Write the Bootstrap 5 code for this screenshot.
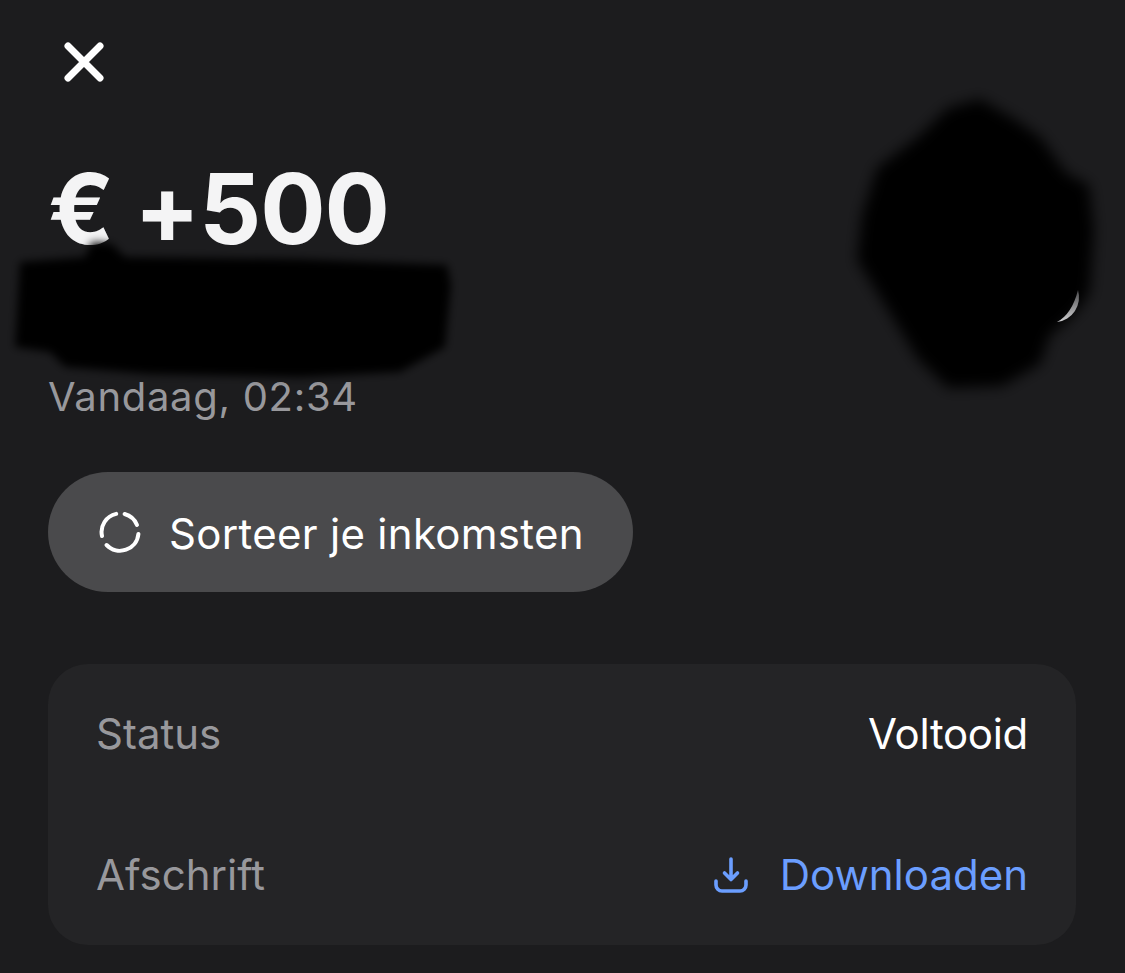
<!DOCTYPE html>
<html lang="nl">
<head>
  <meta charset="UTF-8" />
  <meta name="viewport" content="width=device-width, initial-scale=1" />
  <title>Transactie</title>
  <link href="https://cdn.jsdelivr.net/npm/bootstrap@5.3.0/dist/css/bootstrap.min.css" rel="stylesheet" />
  <style>
    body {
      background: #1c1c1e;
      font-family: Inter, "Liberation Sans", sans-serif;
      color: #fff;
      height: 973px;
      overflow: hidden;
    }
    .sheet {
      position: relative;
      height: 973px;
      padding: 40px 49px 0 48px;
    }
    .close-x {
      display: block;
      width: 44px;
      height: 44px;
      margin-left: 14px;
      padding: 0;
      background: none;
      border: 0;
    }
    .amount {
      margin: 66px 0 0 0;
      font-size: 97px;
      line-height: 118px;
      font-weight: 700;
      color: #f4f4f5;
      letter-spacing: -1px;
      word-spacing: -1px;
    }
    .sender {
      height: 105px;
    }
    .stamp {
      font-size: 40px;
      line-height: 48px;
      color: #98989c;
      letter-spacing: .7px;
    }
    .sort-btn {
      height: 120px;
      width: 585px;
      margin-top: 51px;
      padding: 3px 0 0 51px;
      gap: 28px;
      border: 0;
      border-radius: 60px;
      background: #4a4a4c;
      color: #fff;
      font-size: 42px;
      letter-spacing: .3px;
    }
    .sort-btn svg {
      margin-top: -3px;
    }
    .info-box {
      margin-top: 72px;
      height: 281px;
      padding: 46px 48px 46px 48px;
      border-radius: 40px;
      background: #242426;
      font-size: 42px;
      line-height: 48px;
    }
    .info-key {
      color: #98989c;
    }
    .info-value {
      letter-spacing: -.3px;
    }
    .info-link {
      color: #6b9eff;
      text-decoration: none;
      gap: 32px;
    }
    .scribbles {
      position: absolute;
      top: 0;
      left: 0;
    }
  </style>
</head>
<body>
  <div class="sheet">
    <button class="close-x" type="button" aria-label="Sluiten">
      <svg width="44" height="44" viewBox="0 0 44 44" fill="none" stroke="#fff" stroke-width="7" stroke-linecap="round">
        <path d="M6 6 L38 38 M38 6 L6 38" />
      </svg>
    </button>

    <h1 class="amount">€ +500</h1>
    <div class="sender"></div>
    <div class="stamp">Vandaag, 02:34</div>

    <button class="sort-btn d-flex align-items-center" type="button">
      <svg width="42" height="42" viewBox="0 0 42 42" fill="none" stroke="#fff" stroke-width="4" stroke-linecap="round">
        <path d="M17.2 2.9 A18.5 18.5 0 0 0 3 25" />
        <path d="M25.6 3 A18.5 18.5 0 0 1 38 14" />
        <path d="M39.4 23 A18.5 18.5 0 0 1 7.6 34" />
      </svg>
      <span>Sorteer je inkomsten</span>
    </button>

    <div class="info-box d-flex flex-column justify-content-between">
      <div class="d-flex justify-content-between align-items-center">
        <span class="info-key">Status</span>
        <span class="info-value">Voltooid</span>
      </div>
      <div class="d-flex justify-content-between align-items-center">
        <span class="info-key">Afschrift</span>
        <a class="info-link d-flex align-items-center" href="#">
          <svg width="34" height="36" viewBox="0 0 34 36" fill="none" stroke="#6b9eff" stroke-width="3.6" stroke-linecap="round" stroke-linejoin="round">
            <path d="M17 2 V22 M10.5 16 L17 22.5 L23.5 16" />
            <path d="M2 24 V28 A6 6 0 0 0 8 34 H26 A6 6 0 0 0 32 28 V24" />
          </svg>
          <span>Downloaden</span>
        </a>
      </div>
    </div>

    <!-- blacked out name and avatar -->
    <svg class="scribbles" width="1125" height="973" viewBox="0 0 1125 973">
      <defs>
        <filter id="soft" x="-10%" y="-10%" width="120%" height="120%">
          <feGaussianBlur stdDeviation="4" />
        </filter>
        <filter id="softer" x="-10%" y="-10%" width="120%" height="120%">
          <feGaussianBlur stdDeviation="7" />
        </filter>
        <linearGradient id="glint" x1="0" y1="0" x2="0" y2="1">
          <stop offset="0" stop-color="#4a4a4c" />
          <stop offset="1" stop-color="#d0d0d2" />
        </linearGradient>
      </defs>
      <path fill="#000" filter="url(#soft)" d="M20 262 L85 257 L92 242 L112 244 L125 257 L300 259 L447 265 L451 285 L445 347 L400 372 L300 377 L150 374 L65 367 L50 352 L15 347 Z" />
      <path fill="#000" filter="url(#softer)" d="M980 99 L1016 120 L1041 138 L1066 173 L1089 185 L1094 230 L1090 290 C1086 303 1068 322 1050 335 L1040 364 L1002 386 L948 388 L918 359 L875 289 L857 260 L862 215 L877 168 L918 137 L948 108 Z" />
      <path fill="url(#glint)" d="M1078 290 A25 25 0 0 1 1057 322 Q1072 314 1078 290 Z" />
    </svg>
  </div>
  <script src="https://cdn.jsdelivr.net/npm/bootstrap@5.3.0/dist/js/bootstrap.bundle.min.js"></script>
</body>
</html>
